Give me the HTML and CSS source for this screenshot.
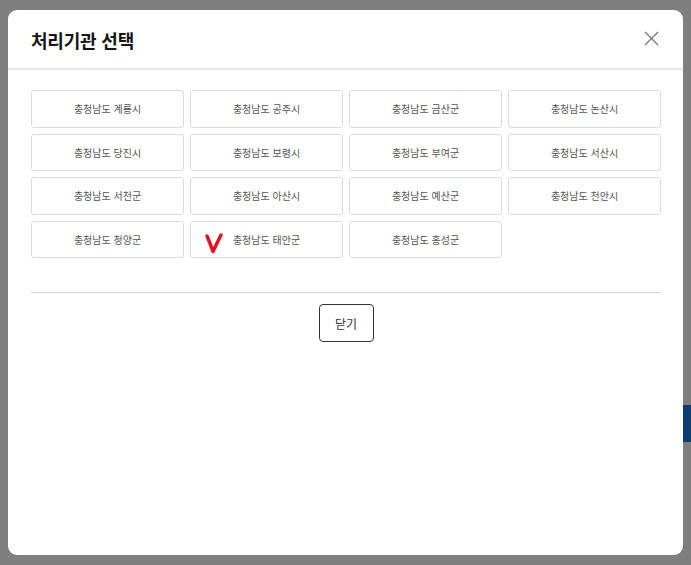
FILE: index.html
```html
<!DOCTYPE html>
<html lang="ko">
<head>
<meta charset="utf-8">
<title>처리기관 선택</title>
<link rel="stylesheet" href="styles.css">
</head>
<body>
<div class="backdrop">
  <div class="bg-strip"></div>
</div>
<div class="modal">
  <div class="modal-header">
    <h2 class="modal-title">처리기관 선택</h2>
    <button class="close-btn" aria-label="닫기">
      <svg width="15" height="15" viewBox="0 0 15 15"><path d="M1 1 L14 14 M14 1 L1 14" stroke="#7a7a7a" stroke-width="1.4" fill="none"/></svg>
    </button>
  </div>
  <div class="modal-body">
    <div class="org-grid">
      <button class="org-btn">충청남도 계룡시</button>
      <button class="org-btn">충청남도 공주시</button>
      <button class="org-btn">충청남도 금산군</button>
      <button class="org-btn">충청남도 논산시</button>
      <button class="org-btn">충청남도 당진시</button>
      <button class="org-btn">충청남도 보령시</button>
      <button class="org-btn">충청남도 부여군</button>
      <button class="org-btn">충청남도 서산시</button>
      <button class="org-btn">충청남도 서천군</button>
      <button class="org-btn">충청남도 아산시</button>
      <button class="org-btn">충청남도 예산군</button>
      <button class="org-btn">충청남도 천안시</button>
      <button class="org-btn">충청남도 청양군</button>
      <button class="org-btn marked">충청남도 태안군<svg class="check-mark" width="18" height="22" viewBox="0 0 18 22"><path d="M2 4 Q5 11 8 19.5 M16 3 Q12 11 8 19.5" stroke="#e8101a" stroke-width="3.4" stroke-linecap="round" fill="none"/></svg></button>
      <button class="org-btn">충청남도 홍성군</button>
    </div>
    <div class="divider"></div>
    <div class="footer">
      <button class="btn-close-text">닫기</button>
    </div>
  </div>
</div>
</body>
</html>
```

FILE: styles.css
```css
* { box-sizing: border-box; }
html, body {
  margin: 0;
  padding: 0;
  width: 691px;
  height: 565px;
  overflow: hidden;
  background: #7f7f7f;
  font-family: "Noto Sans CJK KR", "Noto Sans", sans-serif;
}
.backdrop {
  width: 691px;
  height: 565px;
  display: flex;
  flex-direction: column;
  align-items: flex-end;
  padding-top: 405px;
}
.bg-strip {
  width: 8px;
  height: 37px;
  background: #0f3d6e;
}
.modal {
  position: absolute;
  left: 8px;
  top: 10px;
  width: 675px;
  height: 545px;
  background: #fff;
  border-radius: 9px;
  overflow: hidden;
}
.modal-header {
  height: 60px;
  border-bottom: 2px solid #e8e8e8;
  display: flex;
  align-items: center;
  justify-content: space-between;
  padding: 0 24px 0 23px;
}
.modal-title {
  margin: 0;
  font-size: 18px;
  font-weight: 700;
  color: #151515;
  letter-spacing: -0.2px;
  position: relative;
  top: 1px;
}
.close-btn {
  border: 0;
  background: none;
  padding: 0;
  width: 15px;
  height: 15px;
  display: flex;
  cursor: pointer;
  position: relative;
  top: -1px;
}
.modal-body {
  padding: 20px 22px 0 23px;
}
.org-grid {
  display: grid;
  grid-template-columns: repeat(4, 153px);
  grid-auto-rows: 37.5px;
  column-gap: 6px;
  row-gap: 6px;
}
.org-btn {
  height: 37.5px;
  border: 1px solid #dcdcdc;
  border-radius: 3px;
  background: #fff;
  font-family: inherit;
  font-size: 10px;
  font-weight: 400;
  color: #555;
  padding: 0;
  position: relative;
}
.check-mark {
  position: absolute;
  left: 14px;
  top: 10px;
}
.divider {
  margin-top: 34px;
  height: 1px;
  background: #d6d6d6;
}
.footer {
  display: flex;
  justify-content: center;
  padding-top: 11px;
}
.btn-close-text {
  width: 55px;
  height: 38px;
  border: 1px solid #333;
  border-radius: 4px;
  background: #fff;
  font-family: inherit;
  font-size: 12px;
  color: #333;
  padding: 0;
}
```
